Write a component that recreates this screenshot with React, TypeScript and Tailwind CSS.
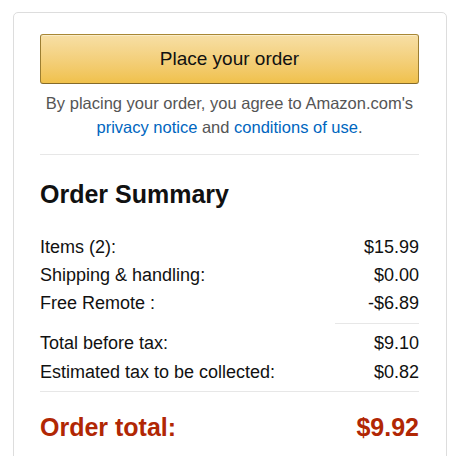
import React from "react";

function Row({ label, value, className = "" }: { label: string; value: string; className?: string }) {
  return (
    <div className={"flex justify-between " + className}>
      <span>{label}</span>
      <span>{value}</span>
    </div>
  );
}

export default function App() {
  return (
    <div
      className="h-[456px] w-[456px] overflow-hidden bg-white pt-[12px] pl-[13px]"
      style={{ fontFamily: '"Liberation Sans", Arial, sans-serif' }}
    >
      <div className="h-[470px] w-[434px] rounded-[5px] border border-[#dddddd] bg-white pt-[21px] pl-[26px] pr-[27px]">
        <button className="flex h-[50px] w-full items-center justify-center rounded-[3px] border border-t-[#a88734] border-x-[#9c7e31] border-b-[#846a29] bg-gradient-to-b from-[#f7dfa5] to-[#f0c14b] text-[19px] text-[#111111] shadow-[inset_0_1px_0_rgba(255,255,255,0.4)]">
          Place your order
        </button>
        <p className="mt-[7px] text-center text-[16.5px] leading-[24px] text-[#555555]">
          By placing your order, you agree to Amazon.com's
          <br />
          <span className="text-[#0066c0]">privacy notice</span> and{" "}
          <span className="text-[#0066c0]">conditions of use</span>.
        </p>
        <div className="mt-[15px] h-px bg-[#e7e7e7]" />
        <h2 className="mt-[24px] text-[25px] font-bold leading-[30px] text-[#111111]">Order Summary</h2>
        <div className="mt-[24px] text-[18px] leading-[28px] text-[#111111]">
          <Row label="Items (2):" value="$15.99" />
          <Row label="Shipping & handling:" value="$0.00" />
          <Row label="Free Remote :" value="-$6.89" />
        </div>
        <div className="mt-[6px] flex justify-end">
          <div className="h-px w-[84px] bg-[#e7e7e7]" />
        </div>
        <div className="mt-[5px] text-[18px] leading-[29px] text-[#111111]">
          <Row label="Total before tax:" value="$9.10" />
          <Row label="Estimated tax to be collected:" value="$0.82" />
        </div>
        <div className="mt-[4px] h-px bg-[#e7e7e7]" />
        <div className="mt-[20px] flex justify-between text-[25px] font-bold leading-[30px] text-[#b12704]">
          <span>Order total:</span>
          <span>$9.92</span>
        </div>
      </div>
    </div>
  );
}
